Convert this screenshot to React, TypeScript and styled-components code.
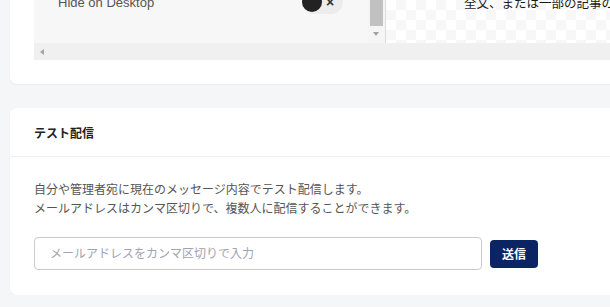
import { FC } from 'react';
import styled, { createGlobalStyle } from 'styled-components';

const GlobalStyle = createGlobalStyle`
  html, body {
    margin: 0;
    padding: 0;
    overflow: hidden;
    background: #f5f6f8;
    font-family: "Liberation Sans", "Noto Sans CJK JP", sans-serif;
  }
  * {
    box-sizing: border-box;
  }
`;

const App: FC = () => {
  return (
    <>
      <GlobalStyle />
      <Page>
        <Card>
          <PreviewBlock>
            <Preview>
              <PreviewBody>
                <SettingsPane>
                  <SettingRow>
                    <SettingLabel>Hide on Desktop</SettingLabel>
                    <Toggle>
                      <Knob />
                      <Cross>×</Cross>
                    </Toggle>
                  </SettingRow>
                </SettingsPane>
                <VScroll>
                  <Thumb />
                  <Arrow $dir="down" />
                </VScroll>
                <Canvas>
                  <CanvasText>全文、または一部の記事の無料公開部分をここに表示します。</CanvasText>
                </Canvas>
              </PreviewBody>
              <HScroll>
                <Arrow $dir="left" />
              </HScroll>
            </Preview>
          </PreviewBlock>
        </Card>

        <Card>
          <CardHeader>
            <CardTitle>テスト配信</CardTitle>
          </CardHeader>
          <CardBody>
            <Desc>
              自分や管理者宛に現在のメッセージ内容でテスト配信します。
              <br />
              メールアドレスはカンマ区切りで、複数人に配信することができます。
            </Desc>
            <Form onSubmit={(e) => e.preventDefault()}>
              <EmailInput type="text" placeholder="メールアドレスをカンマ区切りで入力" />
              <SendButton type="submit">送信</SendButton>
            </Form>
          </CardBody>
        </Card>
      </Page>
    </>
  );
};

export default App;

const Page = styled.div`
  display: flex;
  flex-direction: column;
  gap: 24px;
  width: 820px;
  margin-top: -44px;
  padding: 0 10px;
`;

const Card = styled.section`
  background: #fff;
  border-radius: 7px;
  box-shadow: 0 1px 2px rgba(20, 30, 60, 0.05);
`;

const PreviewBlock = styled.div`
  padding: 24px;
`;

const Preview = styled.div`
  display: flex;
  flex-direction: column;
`;

const PreviewBody = styled.div`
  display: flex;
  height: 63px;
`;

const SettingsPane = styled.div`
  width: 334px;
  background: #f7f7f7;
  padding: 0 25px 0 24px;
`;

const SettingRow = styled.div`
  display: flex;
  align-items: center;
  justify-content: space-between;
  height: 44px;
`;

const SettingLabel = styled.span`
  font-size: 13px;
  color: #555;
`;

const Toggle = styled.div`
  position: relative;
  display: flex;
  align-items: center;
  width: 41px;
  height: 24px;
  border-radius: 12px;
  background: #ececec;
`;

const Knob = styled.span`
  width: 20px;
  height: 20px;
  border-radius: 50%;
  background: #222;
`;

const Cross = styled.span`
  margin-left: 4px;
  font-size: 14px;
  font-weight: 700;
  line-height: 1;
  color: #333;
`;

const VScroll = styled.div`
  display: flex;
  flex-direction: column;
  align-items: center;
  width: 18px;
  padding-right: 1px;
  background: #f5f5f5;
  border-right: 1px solid #dcdcdc;
`;

const Thumb = styled.div`
  width: 13px;
  height: 46px;
  background: #c1c1c1;
  margin-bottom: 6px;
`;

const Arrow = styled.span<{ $dir: 'down' | 'left' }>`
  width: 0;
  height: 0;
  ${({ $dir }) =>
    $dir === 'down'
      ? `
    border-left: 3.5px solid transparent;
    border-right: 3.5px solid transparent;
    border-top: 4px solid #a3a3a3;
  `
      : `
    border-top: 3.5px solid transparent;
    border-bottom: 3.5px solid transparent;
    border-right: 4px solid #a3a3a3;
  `}
`;

const Canvas = styled.div`
  flex: 1;
  background-color: #fff;
  background-image: linear-gradient(45deg, #f7f7f7 25%, transparent 25%, transparent 75%, #f7f7f7 75%),
    linear-gradient(45deg, #f7f7f7 25%, transparent 25%, transparent 75%, #f7f7f7 75%);
  background-size: 20px 20px;
  background-position: 0 0, 10px 10px;
  padding: 15px 0 0 78px;
  overflow: hidden;
`;

const CanvasText = styled.p`
  margin: 0;
  font-size: 12.5px;
  line-height: 18px;
  color: #1a1a1a;
  white-space: nowrap;
`;

const HScroll = styled.div`
  display: flex;
  align-items: center;
  height: 17px;
  padding-left: 6px;
  background: #f0f0f0;
`;

const CardHeader = styled.header`
  display: flex;
  align-items: center;
  height: 49px;
  padding: 0 24px;
  border-bottom: 1px solid #eef0f3;
`;

const CardTitle = styled.h2`
  margin: 0;
  font-size: 12px;
  font-weight: 700;
  color: #222;
`;

const CardBody = styled.div`
  padding: 24px 24px 25px;
`;

const Desc = styled.p`
  margin: 0 0 18px;
  font-size: 12px;
  line-height: 19px;
  color: #555;
`;

const Form = styled.form`
  display: flex;
  align-items: center;
  gap: 8px;
`;

const EmailInput = styled.input`
  width: 448px;
  height: 33px;
  padding: 0 15px;
  border: 1px solid #c8cad8;
  border-radius: 4px;
  font-family: inherit;
  font-size: 12px;
  color: #333;
  outline: none;

  &::placeholder {
    color: #a0a4b2;
  }
`;

const SendButton = styled.button`
  width: 48px;
  height: 28px;
  border: none;
  border-radius: 4px;
  background: #0b2463;
  color: #fff;
  font-family: inherit;
  font-size: 12px;
  font-weight: 700;
  cursor: pointer;
`;
